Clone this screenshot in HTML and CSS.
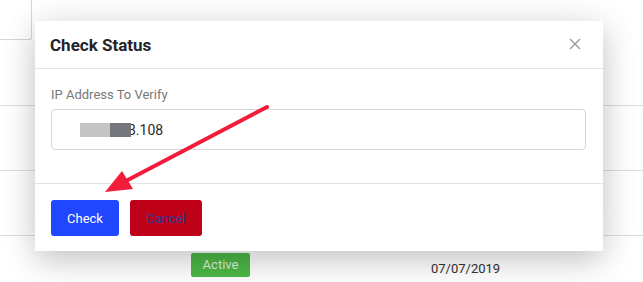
FILE: index.html
```html
<!DOCTYPE html>
<html>
<head>
<meta charset="utf-8">
<link rel="stylesheet" href="styles.css">
</head>
<body>
<div class="page">
  <div class="topbox"></div>
  <div class="rows">
    <div class="row"></div>
    <div class="row bordered"></div>
    <div class="row bordered"></div>
    <div class="row bordered last">
      <span class="cell-spacer"></span>
      <span class="badge">Active</span>
      <span class="date">07/07/2019</span>
    </div>
  </div>
</div>

<div class="modal">
  <div class="modal-header">
    <h2 class="modal-title">Check Status</h2>
    <svg class="close" width="12" height="12" viewBox="0 0 12 12">
      <path d="M1 1 L11 11 M11 1 L1 11" stroke="#9a9a9a" stroke-width="1.4" fill="none"/>
    </svg>
  </div>
  <div class="modal-body">
    <label class="label">IP Address To Verify</label>
    <div class="input">
      <span class="redact light"></span><span class="redact dark"></span><span class="ip">3.108</span>
    </div>
  </div>
  <div class="modal-footer">
    <button class="btn btn-check">Check</button>
    <button class="btn btn-cancel">Cancel</button>
  </div>
</div>

<svg class="arrow" width="643" height="282" viewBox="0 0 643 282">
  <line x1="267" y1="107" x2="124" y2="182" stroke="#f11d3b" stroke-width="4" stroke-linecap="round"/>
  <polygon points="105,192 122,171 133,189" fill="#f11d3b"/>
</svg>
</body>
</html>
```

FILE: styles.css
```css
html, body {
  margin: 0;
  padding: 0;
  background: #ffffff;
  width: 643px;
  height: 282px;
  overflow: hidden;
  font-family: Roboto, "Liberation Sans", sans-serif;
}

.page {
  width: 643px;
}

.topbox {
  width: 31px;
  height: 39px;
  border-right: 1px solid #d6d6d6;
  border-bottom: 1px solid #d6d6d6;
  border-bottom-right-radius: 3px;
}

.rows {
  display: flex;
  flex-direction: column;
}

.row {
  height: 65px;
  box-sizing: border-box;
}

.row.bordered {
  border-top: 1px solid #dcdcdc;
}

.row.last {
  height: 47px;
  display: grid;
  grid-template-columns: 191px 240px 1fr;
  align-items: start;
  padding-top: 17px;
}

.badge {
  width: 59px;
  height: 24px;
  box-sizing: border-box;
  background: #4cb847;
  color: rgba(255,255,255,0.82);
  font-size: 13px;
  line-height: 24px;
  text-align: center;
  border-radius: 2px;
}

.date {
  font-size: 13px;
  color: #333;
  line-height: 24px;
  padding-top: 4px;
}

.modal {
  position: absolute;
  left: 35px;
  top: 21px;
  width: 568px;
  background: #fff;
  box-shadow: 0 10px 30px rgba(0,0,0,0.2), 0 0 40px rgba(0,0,0,0.06);
}

.modal-header {
  height: 48px;
  box-sizing: border-box;
  border-bottom: 1px solid #e3e3e3;
  display: flex;
  align-items: center;
  justify-content: space-between;
  padding: 0 22px 0 15px;
}

.modal-title {
  margin: 0;
  font-size: 17px;
  font-weight: 700;
  color: #23232b;
}

.close {
  display: block;
  margin-top: -1px;
}

.modal-body {
  padding: 17px 17px 33px 16px;
  display: flex;
  flex-direction: column;
}

.label {
  font-size: 13px;
  line-height: 18px;
  color: #777;
  margin-bottom: 5px;
}

.input {
  height: 41px;
  box-sizing: border-box;
  border: 1px solid #d5d5d8;
  border-radius: 4px;
  display: flex;
  align-items: center;
  padding-left: 28px;
}

.redact {
  display: inline-block;
  height: 14px;
  position: relative;
  z-index: 1;
}

.redact.light {
  width: 30px;
  background: #c3c4c3;
}

.redact.dark {
  width: 21px;
  background: #76767d;
}

.ip {
  font-size: 14px;
  color: #2a2a2a;
  margin-left: -3px;
}

.modal-footer {
  border-top: 1px solid #e3e3e3;
  padding: 16px 16px 15px;
  display: flex;
  gap: 11px;
}

.btn {
  height: 36px;
  border: none;
  border-radius: 3px;
  padding: 0 16px;
  font-family: Roboto, "Liberation Sans", sans-serif;
  font-size: 13px;
}

.btn-check {
  background: #2046fe;
  color: #fff;
  width: 68px;
}

.btn-cancel {
  background: #be0019;
  color: #2b3f9e;
  width: 72px;
}

.arrow {
  position: absolute;
  left: 0;
  top: 0;
  pointer-events: none;
}
```
